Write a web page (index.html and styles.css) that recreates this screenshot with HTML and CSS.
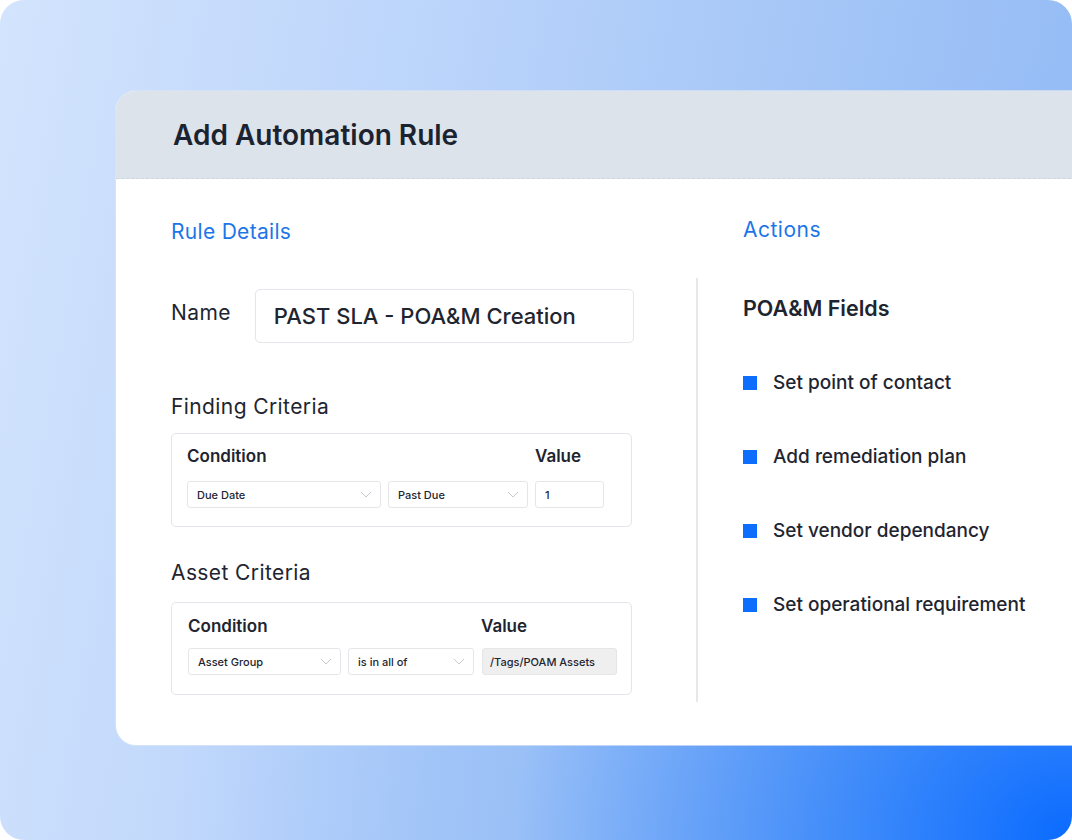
FILE: index.html
```html
<!DOCTYPE html>
<html>
<head>
<meta charset="utf-8">
<link rel="stylesheet" href="styles.css">
</head>
<body>
<div class="frame">
  <div class="card">
    <div class="card-head"><h1 class="title">Add Automation Rule</h1></div>
    <div class="card-body">
      <section class="left">
        <h2 class="section-title">Rule Details</h2>
        <div class="name-row">
          <span class="label">Name</span>
          <div class="name-input">PAST SLA - POA&amp;M Creation</div>
        </div>
        <h3 class="label crit-title">Finding Criteria</h3>
        <div class="crit-box finding">
          <span class="col-head">Condition</span>
          <span></span>
          <span class="col-head">Value</span>
          <div class="select">Due Date<svg class="chev" viewBox="0 0 12 7"><polyline points="1,1 6,6 11,1"/></svg></div>
          <div class="select">Past Due<svg class="chev" viewBox="0 0 12 7"><polyline points="1,1 6,6 11,1"/></svg></div>
          <div class="select">1</div>
        </div>
        <h3 class="label crit-title asset-title">Asset Criteria</h3>
        <div class="crit-box asset">
          <span class="col-head">Condition</span>
          <span></span>
          <span class="col-head">Value</span>
          <div class="select">Asset Group<svg class="chev" viewBox="0 0 12 7"><polyline points="1,1 6,6 11,1"/></svg></div>
          <div class="select">is in all of<svg class="chev" viewBox="0 0 12 7"><polyline points="1,1 6,6 11,1"/></svg></div>
          <div class="select filled">/Tags/POAM Assets</div>
        </div>
      </section>
      <div class="divider"></div>
      <section class="right">
        <h2 class="section-title actions-title">Actions</h2>
        <h3 class="fields-title">POA&amp;M Fields</h3>
        <ul class="actions">
          <li><span class="sq"></span>Set point of contact</li>
          <li><span class="sq"></span>Add remediation plan</li>
          <li><span class="sq"></span>Set vendor dependancy</li>
          <li><span class="sq"></span>Set operational requirement</li>
        </ul>
      </section>
    </div>
  </div>
</div>
</body>
</html>
```
FILE: styles.css
```css
* { box-sizing: border-box; }
html, body { margin: 0; padding: 0; background: #ffffff; }
body { font-family: Inter, "Noto Sans", "Liberation Sans", sans-serif; color: #1e2530; }
h1, h2, h3, ul { margin: 0; padding: 0; font-weight: inherit; }

.frame {
  width: 1072px;
  height: 840px;
  border-radius: 24px;
  overflow: hidden;
  padding: 91px 0 0 116px;
  background:
    radial-gradient(ellipse 900px 780px at 100% 100%, #0a6bff 0%, #3f8bfa 25%, rgba(140,184,246,0.6) 62%, rgba(160,196,248,0) 100%),
    linear-gradient(100deg, #d3e4fd 0%, #bcd5fb 35%, #a6c7f7 65%, #8fb8f5 100%);
}

.card {
  width: 1000px;
  height: 654px;
  background: #ffffff;
  border-radius: 20px 0 0 20px;
  overflow: hidden;
  box-shadow: 0 0 0 1px rgba(220,230,245,0.7);
}

.card-head {
  height: 88px;
  background: #dde3ea;
  border-bottom: 1px dashed #cfd6df;
  display: flex;
  align-items: center;
  padding-left: 57px;
}
.title { font-size: 28px; font-weight: 600; color: #1c2330; letter-spacing: 0; }

.card-body { display: flex; padding-left: 55px; }

.left { width: 463px; display: flex; flex-direction: column; padding-top: 41px; }

.section-title { font-size: 21px; line-height: 24px; color: #1c76e8; font-weight: 400; letter-spacing: 0.3px; }

.name-row { display: flex; align-items: center; margin-top: 45px; }
.label { font-size: 21px; line-height: 24px; color: #1e2530; font-weight: 400; letter-spacing: 0.4px; }
.name-row .label { width: 84px; margin-top: -6px; }
.name-input {
  width: 380px;
  height: 54px;
  border: 1.5px solid #e3e6ea;
  border-radius: 5px;
  display: flex;
  align-items: center;
  padding-left: 18px;
  font-size: 22px;
  font-weight: 500;
  color: #1e2530;
}

.crit-title { margin-top: 52px; }
.asset-title { margin-top: 34px; }

.crit-box {
  margin-top: 14px;
  width: 461px;
  border: 1.5px solid #e2e5e9;
  border-radius: 5px;
  display: grid;
  align-items: center;
  row-gap: 15px;
  padding: 12px 0 18px 15px;
}
.asset { margin-top: 17px; padding: 13px 0 19px 16px; row-gap: 12px; }
.finding { grid-template-columns: 194px 140px 69px; column-gap: 7px; }
.asset { grid-template-columns: 153px 126px 136px; column-gap: 7px; }
.asset .select.filled { margin-left: 1px; }

.col-head { font-size: 17px; line-height: 20px; font-weight: 600; color: #1e2530; }

.select {
  height: 27px;
  border: 1px solid #e4e6ea;
  border-radius: 3px;
  display: flex;
  align-items: center;
  justify-content: space-between;
  padding: 0 8px 0 9px;
  font-size: 11px;
  font-weight: 500;
  color: #1e2530;
  background: #ffffff;
}
.select.filled { background: #efefef; border-color: #e6e6e6; padding-left: 7px; }
.chev { width: 12px; height: 7px; fill: none; stroke: #c6cad0; stroke-width: 1; }

.divider {
  width: 2px;
  height: 424px;
  margin-top: 99px;
  margin-left: 62px;
  background: #e6e8ea;
}

.right { padding-left: 45px; padding-top: 39px; }
.actions-title { line-height: 24px; letter-spacing: 0.5px; }
.fields-title { margin-top: 54px; font-size: 21.5px; line-height: 24px; font-weight: 600; color: #1e2530; }

.actions { list-style: none; margin-top: 52px; display: flex; flex-direction: column; gap: 52px; }
.actions li { display: flex; align-items: center; font-size: 19px; line-height: 22px; font-weight: 500; color: #1e2530; }
.sq { width: 14px; height: 14px; background: #0d6efd; margin-right: 16px; flex: none; }
```
